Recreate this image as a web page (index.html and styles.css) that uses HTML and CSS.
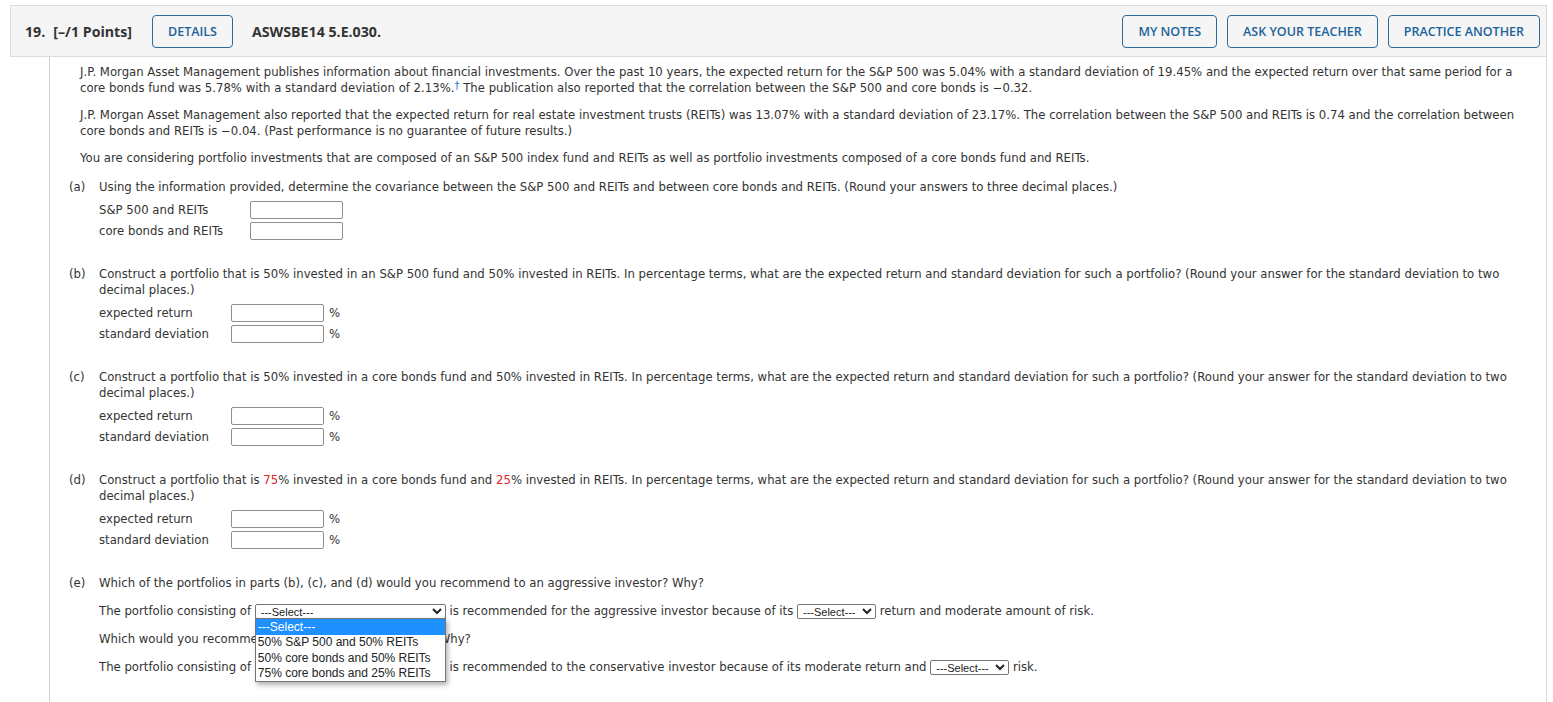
FILE: index.html
```html
<!DOCTYPE html>
<html>
<head>
<meta charset="utf-8">
<link rel="stylesheet" href="styles.css">
</head>
<body>
<div class="question">
  <div class="qhead">
    <span class="qnum">19.</span>
    <span class="pts">[–/1 Points]</span>
    <button class="btn">DETAILS</button>
    <span class="qid">ASWSBE14 5.E.030.</span>
    <div class="spacer"></div>
    <button class="btn">MY NOTES</button>
    <button class="btn">ASK YOUR TEACHER</button>
    <button class="btn">PRACTICE ANOTHER</button>
  </div>
  <div class="qbody">
    <p>J.P. Morgan Asset Management publishes information about financial investments. Over the past 10 years, the expected return for the S&amp;P 500 was 5.04% with a standard deviation of 19.45% and the expected return over that same period for a core bonds fund was 5.78% with a standard deviation of 2.13%.<sup class="dagger">†</sup> The publication also reported that the correlation between the S&amp;P 500 and core bonds is −0.32.</p>
    <p>J.P. Morgan Asset Management also reported that the expected return for real estate investment trusts (REITs) was 13.07% with a standard deviation of 23.17%. The correlation between the S&amp;P 500 and REITs is 0.74 and the correlation between core bonds and REITs is −0.04. (Past performance is no guarantee of future results.)</p>
    <p>You are considering portfolio investments that are composed of an S&amp;P 500 index fund and REITs as well as portfolio investments composed of a core bonds fund and REITs.</p>

    <div class="part part-first">
      <div class="plabel">(a)</div>
      <div class="ptext">
        <div>Using the information provided, determine the covariance between the S&amp;P 500 and REITs and between core bonds and REITs. (Round your answers to three decimal places.)</div>
        <div class="rows">
          <div class="row"><span class="rlabel wide">S&amp;P 500 and REITs</span><input class="ans" type="text"></div>
          <div class="row"><span class="rlabel wide">core bonds and REITs</span><input class="ans" type="text"></div>
        </div>
      </div>
    </div>

    <div class="part">
      <div class="plabel">(b)</div>
      <div class="ptext">
        <div>Construct a portfolio that is 50% invested in an S&amp;P 500 fund and 50% invested in REITs. In percentage terms, what are the expected return and standard deviation for such a portfolio? (Round your answer for the standard deviation to two decimal places.)</div>
        <div class="rows">
          <div class="row"><span class="rlabel">expected return</span><input class="ans" type="text"><span class="pct">%</span></div>
          <div class="row"><span class="rlabel">standard deviation</span><input class="ans" type="text"><span class="pct">%</span></div>
        </div>
      </div>
    </div>

    <div class="part">
      <div class="plabel">(c)</div>
      <div class="ptext">
        <div>Construct a portfolio that is 50% invested in a core bonds fund and 50% invested in REITs. In percentage terms, what are the expected return and standard deviation for such a portfolio? (Round your answer for the standard deviation to two decimal places.)</div>
        <div class="rows">
          <div class="row"><span class="rlabel">expected return</span><input class="ans" type="text"><span class="pct">%</span></div>
          <div class="row"><span class="rlabel">standard deviation</span><input class="ans" type="text"><span class="pct">%</span></div>
        </div>
      </div>
    </div>

    <div class="part">
      <div class="plabel">(d)</div>
      <div class="ptext">
        <div>Construct a portfolio that is <span class="red">75</span>% invested in a core bonds fund and <span class="red">25</span>% invested in REITs. In percentage terms, what are the expected return and standard deviation for such a portfolio? (Round your answer for the standard deviation to two decimal places.)</div>
        <div class="rows">
          <div class="row"><span class="rlabel">expected return</span><input class="ans" type="text"><span class="pct">%</span></div>
          <div class="row"><span class="rlabel">standard deviation</span><input class="ans" type="text"><span class="pct">%</span></div>
        </div>
      </div>
    </div>

    <div class="part">
      <div class="plabel">(e)</div>
      <div class="ptext">
        <div>Which of the portfolios in parts (b), (c), and (d) would you recommend to an aggressive investor? Why?</div>
        <div class="srows">
          <div class="srow">The portfolio consisting of <span class="selwrap"><select class="sel sel-long"><option>---Select---</option></select>
            <div class="dropdown">
              <div class="opt active">---Select---</div>
              <div class="opt">50% S&amp;P 500 and 50% REITs</div>
              <div class="opt">50% core bonds and 50% REITs</div>
              <div class="opt">75% core bonds and 25% REITs</div>
            </div></span> is recommended for the aggressive investor because of its <select class="sel sel-short"><option>---Select---</option></select> return and moderate amount of risk.</div>
          <div class="srow">Which would you recommend to a conservative investor? Why?</div>
          <div class="srow">The portfolio consisting of <select class="sel sel-long"><option>---Select---</option></select> is recommended to the conservative investor because of its moderate return and <select class="sel sel-short"><option>---Select---</option></select> risk.</div>
        </div>
      </div>
    </div>
  </div>
</div>
</body>
</html>
```
FILE: styles.css
```css
html, body {
  margin: 0;
  background: #fff;
}
body {
  padding: 5px 0 0 10px;
  font-family: "DejaVu Sans", Verdana, sans-serif;
  color: #333;
}
.question {
  width: 1537px;
}
.qhead {
  display: flex;
  align-items: center;
  height: 50px;
  border: 1px solid #dcdcdc;
  background: #f5f5f5;
  padding: 0 6px 0 14px;
  font-family: "Open Sans", sans-serif;
  font-size: 14.2px;
  font-weight: 700;
  color: #333;
}
.qnum {
  margin-right: 8px;
}
.pts {
  margin-right: 20px;
}
.qid {
  margin-left: 19px;
}
.spacer {
  flex: 1;
}
.btn {
  height: 33px;
  padding: 0 15px;
  margin-left: 10px;
  border: 1px solid #2c6b9c;
  border-radius: 4px;
  background: transparent;
  color: #20639a;
  font-family: "Open Sans", sans-serif;
  font-size: 12.5px;
  font-weight: 600;
}
.pts + .btn {
  margin-left: 0;
}
.qbody {
  margin-left: 39px;
  border-left: 1px solid #cfcfcf;
  border-right: 1px solid #dcdcdc;
  padding: 7px 12px 40px 30px;
  font-size: 11.7px;
  line-height: 16px;
  min-height: 600px;
}
.qbody p {
  margin: 0 0 11px;
}
.dagger {
  color: #1a6fd0;
  font-size: 10px;
  vertical-align: 3px;
  line-height: 0;
}
.red {
  color: #e02525;
}
.part {
  display: flex;
  margin-top: 25px;
}
.part-first {
  margin-top: 13px;
}
.plabel {
  flex: none;
  width: 30px;
  margin-left: -11px;
}
.ptext {
  flex: 1;
}
.rows {
  margin-top: 4px;
}
.row {
  display: flex;
  align-items: center;
  height: 21px;
}
.rlabel {
  width: 132px;
  flex: none;
}
.rlabel.wide {
  width: 151px;
}
.ans {
  width: 93px;
  height: 18px;
  box-sizing: border-box;
  margin: 0;
  border: 1px solid #8f8f8f;
  border-radius: 2px;
  background: #fff;
}
.pct {
  margin-left: 5px;
}
.srows {
  margin-top: 10px;
}
.srow {
  height: 20px;
  line-height: 20px;
  margin-bottom: 8px;
  white-space: nowrap;
}
.selwrap {
  position: relative;
  display: inline-block;
  vertical-align: middle;
  line-height: 0;
}
.sel {
  height: 15px;
  margin: 0;
  padding: 0 0 0 1px;
  font-family: "Liberation Sans", Arial, sans-serif;
  font-size: 11px;
  color: #222;
  border: 1px solid #767676;
  border-radius: 2px;
  background: #fff;
  vertical-align: middle;
}
.sel-long {
  width: 191px;
}
.sel-short {
  width: 79px;
}
.dropdown {
  position: absolute;
  left: 0;
  top: 14px;
  width: 191px;
  box-sizing: border-box;
  border: 1px solid #767676;
  background: #fff;
  box-shadow: 2px 3px 5px rgba(0, 0, 0, 0.3);
  z-index: 10;
}
.opt {
  height: 15px;
  line-height: 15px;
  padding-left: 2px;
  font-family: "Liberation Sans", Arial, sans-serif;
  font-size: 12px;
  color: #222;
  white-space: nowrap;
}
.opt.active {
  height: 16px;
  line-height: 16px;
  background: #1e90ff;
  color: #fff;
}
.opt:nth-child(3) {
  height: 16px;
  line-height: 16px;
}
```
